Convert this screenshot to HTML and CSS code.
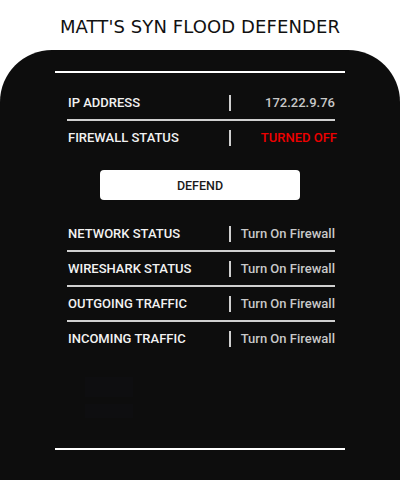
FILE: index.html
```html
<!DOCTYPE html>
<html>
<head>
<meta charset="utf-8">
<link rel="stylesheet" href="styles.css">
</head>
<body>
<header class="header">
  <h1 class="title">MATT'S SYN FLOOD DEFENDER</h1>
</header>
<main class="panel">
  <div class="inner">
    <div class="rule"></div>
    <div class="rows rows-top">
      <div class="row lined">
        <span class="label">IP ADDRESS</span>
        <span class="sep"></span>
        <span class="value">172.22.9.76</span>
      </div>
      <div class="row">
        <span class="label">FIREWALL STATUS</span>
        <span class="sep"></span>
        <span class="value off">TURNED OFF</span>
      </div>
    </div>
    <div class="actions">
      <button class="defend">DEFEND</button>
    </div>
    <div class="rows">
      <div class="row lined">
        <span class="label">NETWORK STATUS</span>
        <span class="sep"></span>
        <span class="value">Turn On Firewall</span>
      </div>
      <div class="row lined">
        <span class="label">WIRESHARK STATUS</span>
        <span class="sep"></span>
        <span class="value">Turn On Firewall</span>
      </div>
      <div class="row lined">
        <span class="label">OUTGOING TRAFFIC</span>
        <span class="sep"></span>
        <span class="value">Turn On Firewall</span>
      </div>
      <div class="row">
        <span class="label">INCOMING TRAFFIC</span>
        <span class="sep"></span>
        <span class="value">Turn On Firewall</span>
      </div>
    </div>
    <div class="ghosts">
      <div class="ghost g1"></div>
      <div class="ghost g2"></div>
    </div>
    <div class="rule"></div>
  </div>
</main>
</body>
</html>
```

FILE: styles.css
```css
html, body {
  margin: 0;
  padding: 0;
  background: #ffffff;
}
body {
  width: 400px;
  height: 480px;
  overflow: hidden;
}
.header {
  height: 50px;
  display: flex;
  align-items: center;
  justify-content: center;
}
.title {
  margin: 0;
  padding-top: 2px;
  font-family: "DejaVu Sans", sans-serif;
  font-weight: normal;
  font-size: 18px;
  color: #111;
  letter-spacing: 0.1px;
}
.panel {
  background: #0d0d0d;
  border-radius: 52px 52px 0 0;
  height: 430px;
}
.inner {
  padding: 21px 55px 0;
  display: flex;
  flex-direction: column;
}
.rule {
  height: 2px;
  background: #ffffff;
}
.rows {
  padding: 0 10px 0 12px;
  display: flex;
  flex-direction: column;
}
.rows-top {
  margin-top: 13px;
}
.row {
  height: 33px;
  display: grid;
  grid-template-columns: 162px 2px 1fr;
  align-items: center;
  font-family: Roboto, "Liberation Sans", sans-serif;
  font-weight: 500;
  font-size: 13px;
}
.row.lined {
  border-bottom: 2px solid #d0d0d0;
}
.label {
  color: #f2f2f2;
  padding-left: 1px;
}
.sep {
  height: 16px;
  background: #cfcfcf;
}
.value {
  text-align: right;
  color: #c8c8c8;
}
.value.off {
  color: #ee0000;
  margin-right: -2px;
}
.actions {
  display: flex;
  justify-content: center;
  margin: 16px 0 17px;
}
.defend {
  width: 200px;
  height: 30px;
  border: none;
  border-radius: 4px;
  background: #ffffff;
  color: #1a1a1a;
  font-family: Roboto, "Liberation Sans", sans-serif;
  font-weight: 500;
  font-size: 12.5px;
  padding: 0;
}
.ghosts {
  margin: 22px 0 0 30px;
  display: flex;
  flex-direction: column;
  gap: 7px;
  height: 71px;
}
.ghost {
  width: 48px;
  background: #0e0e10;
}
.g1 { height: 20px; }
.g2 { height: 14px; }
```
